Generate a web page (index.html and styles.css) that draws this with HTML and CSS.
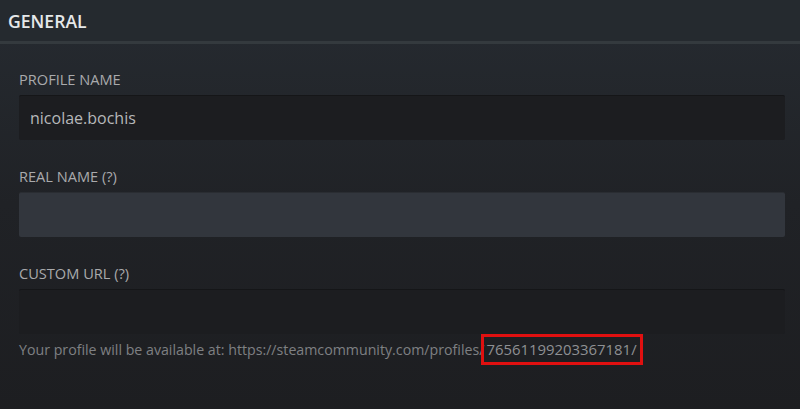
FILE: index.html
```html
<!DOCTYPE html>
<html>
<head>
<meta charset="utf-8">
<link rel="stylesheet" href="styles.css">
</head>
<body>
<div class="page">
  <div class="header"><h2 class="title">GENERAL</h2></div>
  <div class="content">
    <div class="field">
      <div class="label">PROFILE NAME</div>
      <div class="input dark">nicolae.bochis</div>
    </div>
    <div class="field">
      <div class="label">REAL NAME (?)</div>
      <div class="input light"></div>
    </div>
    <div class="field">
      <div class="label">CUSTOM URL (?)</div>
      <div class="input dark"></div>
      <div class="hint">Your profile will be available at: https://steamcommunity.com/profiles/<span class="mark">76561199203367181/</span></div>
    </div>
  </div>
</div>
</body>
</html>
```
FILE: styles.css
```css
html, body {
  margin: 0;
  padding: 0;
  width: 800px;
  height: 409px;
  overflow: hidden;
}
body {
  font-family: "Open Sans", "Noto Sans", sans-serif;
  background: #1e1f22;
}
.page {
  height: 409px;
  display: flex;
  flex-direction: column;
  background: linear-gradient(to bottom, #262b31 0%, #202226 50%, #1d1e21 100%);
}
.header {
  height: 41px;
  background: #252a2f;
  border-bottom: 3px solid #343a3e;
  box-sizing: content-box;
  display: flex;
  align-items: center;
  padding-left: 8px;
}
.title {
  margin: 0;
  font-size: 17.6px;
  font-weight: 600;
  color: #e6e8ea;
  letter-spacing: 0;
}
.content {
  padding: 25px 15px 0 19px;
}
.field {
  margin-bottom: 26px;
}
.label {
  font-size: 14.6px;
  color: #a9aaac;
  line-height: 20px;
  margin-bottom: 6px;
}
.input {
  height: 45px;
  border-radius: 2px;
  box-sizing: border-box;
  padding: 0 11px;
  display: flex;
  align-items: center;
  font-size: 16px;
  color: #b6b8ba;
}
.input.dark {
  background: #1c1d20;
  border-top: 1px solid #151618;
}
.input.light {
  background: #32363d;
  border-top: 1px solid #2a2d32;
}
.hint {
  font-size: 14.2px;
  color: #7e8083;
  margin-top: 0;
  line-height: 31px;
  white-space: nowrap;
}
.mark {
  display: inline-block;
  vertical-align: top;
  border: 3px solid #e01010;
  padding: 0 3px 0 2px;
  line-height: 25px;
  margin-left: -3px;
  font-size: 14.9px;
  color: #8e9093;
}
```
